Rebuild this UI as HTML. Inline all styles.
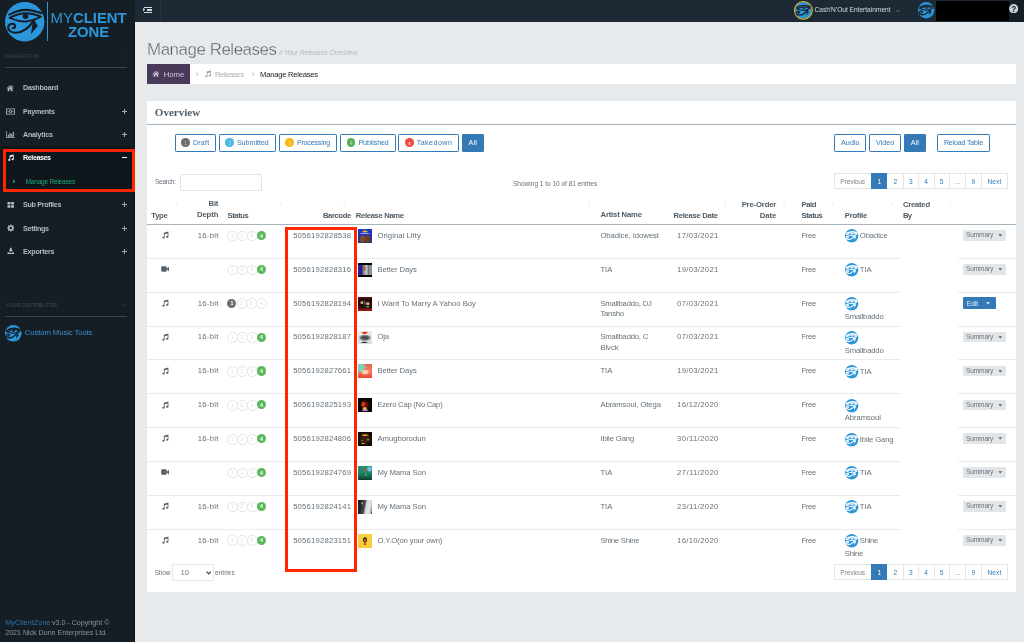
<!DOCTYPE html>
<html lang="en"><head><meta charset="utf-8"><title>Manage Releases - MyClientZone</title>
<style>
html,body{margin:0;padding:0;width:1024px;height:642px;overflow:hidden;background:#e7eaec;}
body{position:relative;font-family:"Liberation Sans",sans-serif;}
div,span,svg{position:absolute;display:block;box-sizing:content-box;}
span{white-space:pre;line-height:1;}
#w{left:0;top:0;width:1024px;height:642px;overflow:hidden;will-change:transform;}
</style></head><body><div id="w">
<div style="left:0.00px;top:0.00px;width:1024.00px;height:642.00px;background:#e7eaec;"></div>
<div style="left:0.00px;top:0.00px;width:135.10px;height:642.00px;background:#151e25;"></div>
<div style="left:134.20px;top:21.50px;width:0.90px;height:642.00px;background:#0c141b;"></div>
<svg style="left:4.90px;top:1.55px;width:39.40px;height:39.40px;overflow:visible" viewBox="0 0 100 100"><circle cx="50" cy="50" r="50" fill="#2b96d9"/><g fill="none" stroke="#151e25" stroke-linecap="round" stroke-linejoin="round"><path d="M11 32 C28 23 42 20 54 20 C68 20 80 25 92 28" stroke-width="5.6"/><path d="M12 40 C30 31 44 28.5 54 28.5 C68 28.5 80 33 91 37 C84 41 78 43 72 46" stroke-width="4.8"/><path d="M12 40 C28 47 42 50.5 54 49.5 C62 48.5 68 47 74 45" stroke-width="4.8"/><path d="M72 48 C62 64 46 77 28 78 C14 78 7 71 8 64 C9 56 18 53 24 57 C28 61 25 67 20 66" stroke-width="5.4"/></g><circle cx="52" cy="36" r="7" fill="#151e25"/><path d="M70.5 49 L66 81 L83.5 60 C80 56 78 53 77 49 Z" fill="#151e25"/></svg>
<div style="left:47.20px;top:1.60px;width:0.90px;height:39.30px;background:#2b96d9;"></div>
<span style="left:50.60px;top:11.00px;font-size:14.9px;color:#2b96d9;letter-spacing:-0.044px;">MY</span>
<span style="left:72.90px;top:11.00px;font-size:14.9px;color:#2b96d9;letter-spacing:0.004px;font-weight:700;">CLIENT</span>
<span style="left:67.90px;top:25.00px;font-size:14.9px;color:#2b96d9;letter-spacing:0.008px;font-weight:700;">ZONE</span>
<span style="left:5.20px;top:54.00px;font-size:5.49px;color:#3d4952;letter-spacing:0.056px;">NAVIGATION</span>
<svg style="left:123.20px;top:54.00px;width:4px;height:4px" viewBox="0 0 10 10" fill="none" stroke="#3d4952" stroke-width="1.50"><path d="M1 7 L5 3 L9 7"/></svg>
<div style="left:5.20px;top:67.10px;width:121.60px;height:0.80px;background:#36424b;"></div>
<svg style="left:6.40px;top:83.70px;width:8.2px;height:8.2px" viewBox="0 0 16 16" fill="#b3bbc1"><path d="M8 2.2 L1 8.3 L2 9.4 L8 4.3 L14 9.4 L15 8.3 L12.6 6.2 V3 H10.8 V4.6 Z"/><path d="M3.2 9.3 L8 5.3 L12.8 9.3 V14 H9.4 V10.5 H6.6 V14 H3.2 Z"/></svg>
<span style="left:23.00px;top:85.00px;font-size:7.14px;color:#b3bbc1;letter-spacing:-0.240px;font-weight:700;">Dashboard</span>
<svg style="left:6.00px;top:106.60px;width:9.0px;height:9.0px" viewBox="0 0 16 16" fill="#b3bbc1"><path fill-rule="evenodd" d="M0.3 2.6 H15.7 V13.4 H0.3 Z M1.9 4.2 V11.8 H14.1 V4.2 Z"/><path fill-rule="evenodd" d="M8 4.8 A2.6 3.2 0 1 0 8 11.2 A2.6 3.2 0 1 0 8 4.8 Z M8 6.4 A1 1.6 0 1 1 8 9.6 A1 1.6 0 1 1 8 6.4 Z"/><rect x="3" y="7.2" width="1.6" height="1.6"/><rect x="11.4" y="7.2" width="1.6" height="1.6"/></svg>
<span style="left:23.00px;top:109.00px;font-size:7.14px;color:#b3bbc1;letter-spacing:-0.259px;font-weight:700;">Payments</span>
<div style="left:122.25px;top:111.00px;width:4.80px;height:1.30px;background:#a4acb2;"></div>
<div style="left:124.00px;top:109.25px;width:1.30px;height:4.80px;background:#a4acb2;"></div>
<svg style="left:6.00px;top:129.80px;width:9.0px;height:9.0px" viewBox="0 0 16 16" fill="#b3bbc1"><path d="M0.5 2 H1.8 V13 H15.5 V14.3 H0.5 Z"/><rect x="3.3" y="8.5" width="2" height="3.7"/><rect x="6.2" y="5.5" width="2" height="6.7"/><rect x="9.1" y="7.2" width="2" height="5"/><rect x="12" y="3.5" width="2" height="8.7"/></svg>
<span style="left:23.00px;top:132.00px;font-size:7.14px;color:#b3bbc1;letter-spacing:-0.215px;font-weight:700;">Analytics</span>
<div style="left:122.25px;top:134.00px;width:4.80px;height:1.30px;background:#a4acb2;"></div>
<div style="left:124.00px;top:132.25px;width:1.30px;height:4.80px;background:#a4acb2;"></div>
<div style="left:0.00px;top:145.60px;width:134.90px;height:46.40px;background:#0f161c;"></div>
<svg style="left:6.90px;top:153.90px;width:7.4px;height:7.4px" viewBox="0 0 16 16" fill="#ffffff"><path d="M5.5 3.2 L14.5 1.2 V11.2 A2.3 1.9 0 1 1 12.9 9.6 V5 L7.1 6.3 V12.8 A2.3 1.9 0 1 1 5.5 11.2 Z"/></svg>
<span style="left:23.00px;top:155.00px;font-size:7.14px;color:#ffffff;letter-spacing:-0.404px;font-weight:700;">Releases</span>
<div style="left:122.20px;top:157.00px;width:4.90px;height:1.30px;background:#ffffff;"></div>
<svg style="left:11.10px;top:177.70px;width:6.4px;height:6.4px" viewBox="0 0 16 16" fill="#1fa67a"><path d="M5 3 L11 8 L5 13 Z"/></svg>
<span style="left:25.60px;top:179.00px;font-size:6.59px;color:#1fa67a;letter-spacing:-0.246px;">Manage Releases</span>
<svg style="left:6.70px;top:200.70px;width:7.6px;height:7.6px" viewBox="0 0 16 16" fill="#b3bbc1"><rect x="1" y="2" width="6.3" height="5.3" rx="0.6"/><rect x="8.7" y="2" width="6.3" height="5.3" rx="0.6"/><rect x="1" y="8.7" width="6.3" height="5.3" rx="0.6"/><rect x="8.7" y="8.7" width="6.3" height="5.3" rx="0.6"/></svg>
<span style="left:23.00px;top:202.00px;font-size:7.14px;color:#b3bbc1;letter-spacing:-0.284px;font-weight:700;">Sub Profiles</span>
<div style="left:122.25px;top:204.00px;width:4.80px;height:1.30px;background:#a4acb2;"></div>
<div style="left:124.00px;top:202.25px;width:1.30px;height:4.80px;background:#a4acb2;"></div>
<svg style="left:6.70px;top:224.10px;width:7.6px;height:7.6px" viewBox="0 0 16 16" fill="#b3bbc1"><path fill-rule="evenodd" d="M6.8 1 H9.2 L9.6 3 L10.9 3.6 L12.6 2.4 L14.2 4.1 L13 5.8 L13.5 7 L15.5 7.4 V9.7 L13.5 10 L13 11.3 L14.2 13 L12.6 14.6 L10.9 13.4 L9.6 14 L9.2 16 H6.8 L6.4 14 L5.1 13.4 L3.4 14.6 L1.8 13 L3 11.3 L2.5 10 L0.5 9.7 V7.4 L2.5 7 L3 5.8 L1.8 4.1 L3.4 2.4 L5.1 3.6 L6.4 3 Z M8 5.8 A2.7 2.7 0 1 0 8 11.2 A2.7 2.7 0 1 0 8 5.8 Z"/></svg>
<span style="left:23.00px;top:226.00px;font-size:7.14px;color:#b3bbc1;letter-spacing:-0.290px;font-weight:700;">Settings</span>
<div style="left:122.25px;top:228.00px;width:4.80px;height:1.30px;background:#a4acb2;"></div>
<div style="left:124.00px;top:226.25px;width:1.30px;height:4.80px;background:#a4acb2;"></div>
<svg style="left:6.70px;top:247.40px;width:7.6px;height:7.6px" viewBox="0 0 16 16" fill="#b3bbc1"><path d="M6.3 1.5 H9.7 V6 H12.6 L8 10.8 L3.4 6 H6.3 Z"/><path d="M1 11 H4.6 L6.3 12.6 H9.7 L11.4 11 H15 V14.8 H1 Z"/></svg>
<span style="left:23.00px;top:249.00px;font-size:7.14px;color:#b3bbc1;letter-spacing:-0.211px;font-weight:700;">Exporters</span>
<div style="left:122.25px;top:251.00px;width:4.80px;height:1.30px;background:#a4acb2;"></div>
<div style="left:124.00px;top:249.25px;width:1.30px;height:4.80px;background:#a4acb2;"></div>
<span style="left:5.20px;top:303.00px;font-size:5.49px;color:#3d4952;letter-spacing:-0.174px;">YOUR DISTRIBUTOR</span>
<svg style="left:123.20px;top:302.80px;width:4px;height:4px" viewBox="0 0 10 10" fill="none" stroke="#3d4952" stroke-width="1.50"><path d="M1 7 L5 3 L9 7"/></svg>
<div style="left:5.20px;top:315.90px;width:121.60px;height:0.80px;background:#36424b;"></div>
<svg style="left:5.00px;top:324.90px;width:16.60px;height:16.60px;overflow:visible" viewBox="0 0 100 100"><circle cx="50" cy="50" r="50" fill="#2b96d9"/><g fill="none" stroke="#151e25" stroke-linecap="round" stroke-linejoin="round"><path d="M11 32 C28 23 42 20 54 20 C68 20 80 25 92 28" stroke-width="8.7"/><path d="M12 40 C30 31 44 28.5 54 28.5 C68 28.5 80 33 91 37 C84 41 78 43 72 46" stroke-width="7.4"/><path d="M12 40 C28 47 42 50.5 54 49.5 C62 48.5 68 47 74 45" stroke-width="7.4"/><path d="M72 48 C62 64 46 77 28 78 C14 78 7 71 8 64 C9 56 18 53 24 57 C28 61 25 67 20 66" stroke-width="8.4"/></g><circle cx="52" cy="36" r="7" fill="#151e25"/><path d="M70.5 49 L66 81 L83.5 60 C80 56 78 53 77 49 Z" fill="#151e25"/></svg>
<span style="left:24.70px;top:329.00px;font-size:7.69px;color:#3a8fd2;letter-spacing:-0.068px;">Custom Music Tools</span>
<span style="left:5.20px;top:620.00px;font-size:7.14px;color:#2f72ad;letter-spacing:0.121px;">MyClientZone</span>
<span style="left:51.90px;top:620.00px;font-size:7.14px;color:#8a949b;letter-spacing:-0.002px;">v3.0 - Copyright ©</span>
<span style="left:5.20px;top:630.00px;font-size:7.14px;color:#8a949b;letter-spacing:-0.023px;">2021 Nick Dunn Enterprises Ltd.</span>
<div style="left:3px;top:148.6px;width:126px;height:37.6px;border:3px solid #ff2600;background:none"></div>
<div style="left:134.90px;top:0.00px;width:889.10px;height:21.50px;background:#1d2a35;"></div>
<div style="left:159.60px;top:0.00px;width:0.80px;height:21.50px;background:#263440;"></div>
<div style="left:143.50px;top:6.60px;width:8.20px;height:1.20px;background:#d3d9dd;"></div>
<div style="left:146.90px;top:9.35px;width:4.80px;height:1.20px;background:#d3d9dd;"></div>
<div style="left:143.50px;top:12.10px;width:8.20px;height:1.20px;background:#d3d9dd;"></div>
<svg style="left:143.3px;top:8.4px;width:3px;height:3.2px" viewBox="0 0 3 3.2" fill="#d3d9dd"><path d="M0 0 L2.4 1.6 L0 3.2Z"/></svg>
<svg style="left:795.10px;top:2.10px;width:16.80px;height:16.80px;overflow:visible" viewBox="0 0 100 100"><circle cx="50" cy="50" r="50" fill="#2b96d9"/><circle cx="50" cy="50" r="53" fill="none" stroke="#f2c01e" stroke-width="6"/><g fill="none" stroke="#1d2a35" stroke-linecap="round" stroke-linejoin="round"><path d="M11 32 C28 23 42 20 54 20 C68 20 80 25 92 28" stroke-width="8.7"/><path d="M12 40 C30 31 44 28.5 54 28.5 C68 28.5 80 33 91 37 C84 41 78 43 72 46" stroke-width="7.4"/><path d="M12 40 C28 47 42 50.5 54 49.5 C62 48.5 68 47 74 45" stroke-width="7.4"/><path d="M72 48 C62 64 46 77 28 78 C14 78 7 71 8 64 C9 56 18 53 24 57 C28 61 25 67 20 66" stroke-width="8.4"/></g><circle cx="52" cy="36" r="7" fill="#1d2a35"/><path d="M70.5 49 L66 81 L83.5 60 C80 56 78 53 77 49 Z" fill="#1d2a35"/></svg>
<span style="left:814.50px;top:7.00px;font-size:6.59px;color:#d5dbe0;letter-spacing:0.001px;">Cash&#x27;N&#x27;Out Entertainment</span>
<svg style="left:896.00px;top:8.80px;width:3.6px;height:3.6px" viewBox="0 0 10 10" fill="none" stroke="#aab3ba" stroke-width="1.67"><path d="M1 3 L5 7 L9 3"/></svg>
<svg style="left:917.80px;top:2.00px;width:16.40px;height:16.40px;overflow:visible" viewBox="0 0 100 100"><circle cx="50" cy="50" r="50" fill="#2b96d9"/><g fill="none" stroke="#1d2a35" stroke-linecap="round" stroke-linejoin="round"><path d="M11 32 C28 23 42 20 54 20 C68 20 80 25 92 28" stroke-width="8.7"/><path d="M12 40 C30 31 44 28.5 54 28.5 C68 28.5 80 33 91 37 C84 41 78 43 72 46" stroke-width="7.4"/><path d="M12 40 C28 47 42 50.5 54 49.5 C62 48.5 68 47 74 45" stroke-width="7.4"/><path d="M72 48 C62 64 46 77 28 78 C14 78 7 71 8 64 C9 56 18 53 24 57 C28 61 25 67 20 66" stroke-width="8.4"/></g><circle cx="52" cy="36" r="7" fill="#1d2a35"/><path d="M70.5 49 L66 81 L83.5 60 C80 56 78 53 77 49 Z" fill="#1d2a35"/></svg>
<div style="left:936.00px;top:0.90px;width:72.90px;height:20.60px;background:#000000;"></div>
<div style="left:1008.90px;top:0.00px;width:15.10px;height:21.50px;background:#151e25;"></div>
<svg style="left:1009.05px;top:4.05px;width:9.4px;height:9.4px" viewBox="0 0 20 20"><circle cx="10" cy="10" r="10" fill="#c9ced2"/></svg>
<span style="left:1011.29px;top:6.00px;font-size:8.2px;color:#151e25;letter-spacing:0.000px;font-weight:700;">?</span>
<span style="left:147.00px;top:42.00px;font-size:16.9px;color:#4a565f;letter-spacing:-0.441px;-webkit-text-stroke:0.38px #e7eaec;">Manage Releases</span>
<span style="left:278.80px;top:50.00px;font-size:7.14px;color:#b3bbc1;letter-spacing:-0.214px;font-style:italic;">// Your Releases Overview</span>
<div style="left:146.50px;top:63.90px;width:869.50px;height:19.70px;background:#ffffff;"></div>
<div style="left:146.50px;top:63.90px;width:43.20px;height:19.70px;background:#4a3a59;"></div>
<svg style="left:151.70px;top:70.00px;width:7.8px;height:7.8px" viewBox="0 0 16 16" fill="#cfc7d8"><path d="M8 2.2 L1 8.3 L2 9.4 L8 4.3 L14 9.4 L15 8.3 L12.6 6.2 V3 H10.8 V4.6 Z"/><path d="M3.2 9.3 L8 5.3 L12.8 9.3 V14 H9.4 V10.5 H6.6 V14 H3.2 Z"/></svg>
<span style="left:163.70px;top:71.00px;font-size:7.69px;color:#cfc7d8;letter-spacing:-0.005px;">Home</span>
<svg style="left:194.60px;top:72.00px;width:4.4px;height:4.4px" viewBox="0 0 10 10" fill="none" stroke="#8f989e" stroke-width="1.70"><path d="M3 1 L7 5 L3 9"/></svg>
<svg style="left:203.60px;top:69.90px;width:7.8px;height:7.8px" viewBox="0 0 16 16" fill="#9aa3a9"><path d="M5.5 3.2 L14.5 1.2 V11.2 A2.3 1.9 0 1 1 12.9 9.6 V5 L7.1 6.3 V12.8 A2.3 1.9 0 1 1 5.5 11.2 Z"/></svg>
<span style="left:215.00px;top:71.00px;font-size:7.69px;color:#a8b0b6;letter-spacing:-0.431px;">Releases</span>
<svg style="left:250.80px;top:72.00px;width:4.4px;height:4.4px" viewBox="0 0 10 10" fill="none" stroke="#8f989e" stroke-width="1.70"><path d="M3 1 L7 5 L3 9"/></svg>
<span style="left:260.00px;top:71.00px;font-size:7.69px;color:#222222;letter-spacing:-0.271px;">Manage Releases</span>
<div style="left:146.50px;top:101.10px;width:869.50px;height:491.00px;background:#ffffff;"></div>
<span style="left:154.80px;top:107.00px;font-size:11.0px;color:#4f5d67;letter-spacing:0.028px;font-weight:700;font-family:'Liberation Serif',serif;">Overview</span>
<div style="left:146.50px;top:124.00px;width:869.50px;height:0.90px;background:#a3b2bc;"></div>
<div style="left:174.50px;top:133.50px;width:39.50px;height:16.50px;border:0.9px solid #337ab7;background:#fff;border-radius:1.2px"></div>
<div style="left:181.30px;top:138.30px;width:8.6px;height:8.6px;border-radius:50%;background:#6b6b6b"></div>
<span style="left:184.26px;top:142.00px;font-size:4.8px;color:rgba(255,255,255,0.55);letter-spacing:0.000px;">1</span>
<span style="left:192.90px;top:140.00px;font-size:7.14px;color:#337ab7;letter-spacing:0.199px;">Draft</span>
<div style="left:218.50px;top:133.50px;width:55.50px;height:16.50px;border:0.9px solid #337ab7;background:#fff;border-radius:1.2px"></div>
<div style="left:225.30px;top:138.30px;width:8.6px;height:8.6px;border-radius:50%;background:#4db6e2"></div>
<span style="left:228.26px;top:142.00px;font-size:4.8px;color:rgba(255,255,255,0.55);letter-spacing:0.000px;">2</span>
<span style="left:236.90px;top:140.00px;font-size:7.14px;color:#337ab7;letter-spacing:-0.020px;">Submitted</span>
<div style="left:278.50px;top:133.50px;width:56.70px;height:16.50px;border:0.9px solid #337ab7;background:#fff;border-radius:1.2px"></div>
<div style="left:285.30px;top:138.30px;width:8.6px;height:8.6px;border-radius:50%;background:#fbb516"></div>
<span style="left:288.26px;top:142.00px;font-size:4.8px;color:rgba(255,255,255,0.55);letter-spacing:0.000px;">3</span>
<span style="left:296.90px;top:140.00px;font-size:7.14px;color:#337ab7;letter-spacing:-0.210px;">Processing</span>
<div style="left:340.00px;top:133.50px;width:53.70px;height:16.50px;border:0.9px solid #337ab7;background:#fff;border-radius:1.2px"></div>
<div style="left:346.80px;top:138.30px;width:8.6px;height:8.6px;border-radius:50%;background:#58b158"></div>
<span style="left:349.76px;top:142.00px;font-size:4.8px;color:rgba(255,255,255,0.55);letter-spacing:0.000px;">4</span>
<span style="left:358.40px;top:140.00px;font-size:7.14px;color:#337ab7;letter-spacing:-0.109px;">Published</span>
<div style="left:398.30px;top:133.50px;width:58.70px;height:16.50px;border:0.9px solid #337ab7;background:#fff;border-radius:1.2px"></div>
<div style="left:405.10px;top:138.30px;width:8.6px;height:8.6px;border-radius:50%;background:#f0483e"></div>
<span style="left:407.90px;top:140.00px;font-size:6.0px;color:#ffffff;letter-spacing:0.000px;">x</span>
<span style="left:416.70px;top:140.00px;font-size:7.14px;color:#337ab7;letter-spacing:0.444px;">Takedown</span>
<div style="left:461.50px;top:133.50px;width:22.30px;height:18.30px;background:#337ab7;border-radius:1.2px;"></div>
<span style="left:468.56px;top:140.00px;font-size:7.14px;color:#ffffff;letter-spacing:0.133px;">All</span>
<div style="left:834.30px;top:133.50px;width:30.20px;height:16.50px;border:0.9px solid #337ab7;background:#fff;border-radius:1.2px"></div>
<span style="left:841.07px;top:140.00px;font-size:7.14px;color:#337ab7;letter-spacing:0.055px;">Audio</span>
<div style="left:869.30px;top:133.50px;width:29.70px;height:16.50px;border:0.9px solid #337ab7;background:#fff;border-radius:1.2px"></div>
<span style="left:875.89px;top:140.00px;font-size:7.14px;color:#337ab7;letter-spacing:0.055px;">Video</span>
<div style="left:903.80px;top:133.50px;width:22.00px;height:18.30px;background:#337ab7;border-radius:1.2px;"></div>
<span style="left:910.71px;top:140.00px;font-size:7.14px;color:#ffffff;letter-spacing:0.133px;">All</span>
<div style="left:937.00px;top:133.50px;width:51.20px;height:16.50px;border:0.9px solid #337ab7;background:#fff;border-radius:1.2px"></div>
<span style="left:943.88px;top:140.00px;font-size:7.14px;color:#337ab7;letter-spacing:-0.203px;">Reload Table</span>
<span style="left:154.90px;top:179.00px;font-size:6.59px;color:#67727a;letter-spacing:-0.279px;">Search:</span>
<div style="left:179.5px;top:174.3px;width:80.6px;height:14.6px;border:0.8px solid #dfe3e6;background:#fff;border-radius:1px"></div>
<span style="left:513.00px;top:181.00px;font-size:6.59px;color:#67727a;letter-spacing:-0.033px;">Showing 1 to 10 of 81 entries</span>
<div style="left:834.30px;top:173.00px;width:172.00px;height:14.30px;border:0.6px solid #e3e6e9;background:#fff"></div>
<span style="left:840.37px;top:179.00px;font-size:6.59px;color:#7b858c;letter-spacing:-0.118px;">Previous</span>
<div style="left:871.20px;top:173.00px;width:16.30px;height:15.50px;background:#337ab7;"></div>
<span style="left:877.51px;top:179.00px;font-size:6.59px;color:#ffffff;letter-spacing:0.000px;">1</span>
<span style="left:893.41px;top:179.00px;font-size:6.59px;color:#337ab7;letter-spacing:0.000px;">2</span>
<div style="left:902.70px;top:173.00px;width:0.60px;height:15.50px;background:#e3e6e9;"></div>
<span style="left:908.91px;top:179.00px;font-size:6.59px;color:#337ab7;letter-spacing:0.000px;">3</span>
<div style="left:918.20px;top:173.00px;width:0.60px;height:15.50px;background:#e3e6e9;"></div>
<span style="left:924.31px;top:179.00px;font-size:6.59px;color:#337ab7;letter-spacing:0.000px;">4</span>
<div style="left:933.50px;top:173.00px;width:0.60px;height:15.50px;background:#e3e6e9;"></div>
<span style="left:939.81px;top:179.00px;font-size:6.59px;color:#337ab7;letter-spacing:0.000px;">5</span>
<div style="left:949.20px;top:173.00px;width:0.60px;height:15.50px;background:#e3e6e9;"></div>
<span style="left:954.21px;top:179.00px;font-size:6.59px;color:#7b858c;letter-spacing:0.000px;">…</span>
<div style="left:965.20px;top:173.00px;width:0.60px;height:15.50px;background:#e3e6e9;"></div>
<span style="left:971.56px;top:179.00px;font-size:6.59px;color:#337ab7;letter-spacing:0.000px;">9</span>
<div style="left:981.00px;top:173.00px;width:0.60px;height:15.50px;background:#e3e6e9;"></div>
<span style="left:987.40px;top:179.00px;font-size:6.59px;color:#337ab7;letter-spacing:0.156px;">Next</span>
<div style="left:834.30px;top:564.00px;width:172.00px;height:14.30px;border:0.6px solid #e3e6e9;background:#fff"></div>
<span style="left:840.37px;top:570.00px;font-size:6.59px;color:#7b858c;letter-spacing:-0.118px;">Previous</span>
<div style="left:871.20px;top:564.00px;width:16.30px;height:15.50px;background:#337ab7;"></div>
<span style="left:877.51px;top:570.00px;font-size:6.59px;color:#ffffff;letter-spacing:0.000px;">1</span>
<span style="left:893.41px;top:570.00px;font-size:6.59px;color:#337ab7;letter-spacing:0.000px;">2</span>
<div style="left:902.70px;top:564.00px;width:0.60px;height:15.50px;background:#e3e6e9;"></div>
<span style="left:908.91px;top:570.00px;font-size:6.59px;color:#337ab7;letter-spacing:0.000px;">3</span>
<div style="left:918.20px;top:564.00px;width:0.60px;height:15.50px;background:#e3e6e9;"></div>
<span style="left:924.31px;top:570.00px;font-size:6.59px;color:#337ab7;letter-spacing:0.000px;">4</span>
<div style="left:933.50px;top:564.00px;width:0.60px;height:15.50px;background:#e3e6e9;"></div>
<span style="left:939.81px;top:570.00px;font-size:6.59px;color:#337ab7;letter-spacing:0.000px;">5</span>
<div style="left:949.20px;top:564.00px;width:0.60px;height:15.50px;background:#e3e6e9;"></div>
<span style="left:954.21px;top:570.00px;font-size:6.59px;color:#7b858c;letter-spacing:0.000px;">…</span>
<div style="left:965.20px;top:564.00px;width:0.60px;height:15.50px;background:#e3e6e9;"></div>
<span style="left:971.56px;top:570.00px;font-size:6.59px;color:#337ab7;letter-spacing:0.000px;">9</span>
<div style="left:981.00px;top:564.00px;width:0.60px;height:15.50px;background:#e3e6e9;"></div>
<span style="left:987.40px;top:570.00px;font-size:6.59px;color:#337ab7;letter-spacing:0.156px;">Next</span>
<span style="left:151.30px;top:212.00px;font-size:7.69px;color:#4f5c66;letter-spacing:-0.292px;font-weight:700;">Type</span>
<span style="left:208.59px;top:200.00px;font-size:7.69px;color:#4f5c66;letter-spacing:-0.219px;font-weight:700;">Bit</span>
<span style="left:196.98px;top:211.00px;font-size:7.69px;color:#4f5c66;letter-spacing:-0.090px;font-weight:700;">Depth</span>
<span style="left:227.50px;top:212.00px;font-size:7.69px;color:#4f5c66;letter-spacing:-0.431px;font-weight:700;">Status</span>
<span style="left:323.01px;top:212.00px;font-size:7.69px;color:#4f5c66;letter-spacing:-0.430px;font-weight:700;">Barcode</span>
<span style="left:355.80px;top:212.00px;font-size:7.69px;color:#4f5c66;letter-spacing:-0.347px;font-weight:700;">Release Name</span>
<span style="left:600.50px;top:211.00px;font-size:7.69px;color:#4f5c66;letter-spacing:-0.163px;font-weight:700;">Artist Name</span>
<span style="left:673.41px;top:212.00px;font-size:7.69px;color:#4f5c66;letter-spacing:-0.298px;font-weight:700;">Release Date</span>
<span style="left:741.63px;top:201.00px;font-size:7.69px;color:#4f5c66;letter-spacing:-0.152px;font-weight:700;">Pre-Order</span>
<span style="left:759.75px;top:212.00px;font-size:7.69px;color:#4f5c66;letter-spacing:-0.042px;font-weight:700;">Date</span>
<span style="left:801.50px;top:201.00px;font-size:7.69px;color:#4f5c66;letter-spacing:-0.464px;font-weight:700;">Paid</span>
<span style="left:801.50px;top:212.00px;font-size:7.69px;color:#4f5c66;letter-spacing:-0.431px;font-weight:700;">Status</span>
<span style="left:844.80px;top:212.00px;font-size:7.69px;color:#4f5c66;letter-spacing:-0.255px;font-weight:700;">Profile</span>
<span style="left:903.00px;top:201.00px;font-size:7.69px;color:#4f5c66;letter-spacing:-0.258px;font-weight:700;">Created</span>
<span style="left:903.00px;top:212.00px;font-size:7.69px;color:#4f5c66;letter-spacing:-0.781px;font-weight:700;">By</span>
<svg style="left:175.70px;top:201.2px;width:2.6px;height:5.2px" viewBox="0 0 5 10" fill="#eceff1"><path d="M0 4 L2.5 0 L5 4Z M0 6 L2.5 10 L5 6Z"/></svg>
<svg style="left:279.90px;top:201.2px;width:2.6px;height:5.2px" viewBox="0 0 5 10" fill="#eceff1"><path d="M0 4 L2.5 0 L5 4Z M0 6 L2.5 10 L5 6Z"/></svg>
<svg style="left:343.20px;top:201.2px;width:2.6px;height:5.2px" viewBox="0 0 5 10" fill="#eceff1"><path d="M0 4 L2.5 0 L5 4Z M0 6 L2.5 10 L5 6Z"/></svg>
<svg style="left:587.50px;top:201.2px;width:2.6px;height:5.2px" viewBox="0 0 5 10" fill="#eceff1"><path d="M0 4 L2.5 0 L5 4Z M0 6 L2.5 10 L5 6Z"/></svg>
<svg style="left:723.70px;top:201.2px;width:2.6px;height:5.2px" viewBox="0 0 5 10" fill="#eceff1"><path d="M0 4 L2.5 0 L5 4Z M0 6 L2.5 10 L5 6Z"/></svg>
<svg style="left:782.50px;top:201.2px;width:2.6px;height:5.2px" viewBox="0 0 5 10" fill="#eceff1"><path d="M0 4 L2.5 0 L5 4Z M0 6 L2.5 10 L5 6Z"/></svg>
<svg style="left:831.70px;top:201.2px;width:2.6px;height:5.2px" viewBox="0 0 5 10" fill="#eceff1"><path d="M0 4 L2.5 0 L5 4Z M0 6 L2.5 10 L5 6Z"/></svg>
<svg style="left:890.70px;top:201.2px;width:2.6px;height:5.2px" viewBox="0 0 5 10" fill="#eceff1"><path d="M0 4 L2.5 0 L5 4Z M0 6 L2.5 10 L5 6Z"/></svg>
<svg style="left:948.70px;top:201.2px;width:2.6px;height:5.2px" viewBox="0 0 5 10" fill="#eceff1"><path d="M0 4 L2.5 0 L5 4Z M0 6 L2.5 10 L5 6Z"/></svg>
<div style="left:146.50px;top:224.00px;width:869.50px;height:1.00px;background:#a9b5bd;"></div>
<svg style="left:161.30px;top:231.30px;width:8.2px;height:8.2px" viewBox="0 0 16 16" fill="#55626c"><path d="M5.5 3.2 L14.5 1.2 V11.2 A2.3 1.9 0 1 1 12.9 9.6 V5 L7.1 6.3 V12.8 A2.3 1.9 0 1 1 5.5 11.2 Z"/></svg>
<span style="left:197.71px;top:232.00px;font-size:7.69px;color:#67727a;letter-spacing:0.291px;">16-bit</span>
<div style="left:227.30px;top:230.75px;width:8.6px;height:8.6px;border-radius:50%;background:#fff;border:0.5px solid #e2e5e7"></div>
<span style="left:230.73px;top:234.00px;font-size:4.9px;color:#d9dcdf;letter-spacing:0.000px;">1</span>
<div style="left:237.15px;top:230.75px;width:8.6px;height:8.6px;border-radius:50%;background:#fff;border:0.5px solid #e2e5e7"></div>
<span style="left:240.58px;top:234.00px;font-size:4.9px;color:#d9dcdf;letter-spacing:0.000px;">2</span>
<div style="left:247.00px;top:230.75px;width:8.6px;height:8.6px;border-radius:50%;background:#fff;border:0.5px solid #e2e5e7"></div>
<span style="left:250.43px;top:234.00px;font-size:4.9px;color:#d9dcdf;letter-spacing:0.000px;">3</span>
<div style="left:256.95px;top:231.00px;width:9.1px;height:9.1px;border-radius:50%;background:#5cb85c"></div>
<span style="left:260.05px;top:234.00px;font-size:5.2px;color:#ffffff;letter-spacing:0.000px;font-weight:700;">4</span>
<span style="left:293.13px;top:232.00px;font-size:7.69px;color:#67727a;letter-spacing:0.198px;">5056192828538</span>
<div style="left:358.1px;top:229.00px;width:13.8px;height:13.8px;background:radial-gradient(ellipse 24% 30% at 32% 72%,#7b4a28 0 65%,transparent 100%),radial-gradient(ellipse 24% 32% at 68% 70%,#6b3e1e 0 65%,transparent 100%),radial-gradient(ellipse 22% 8% at 50% 17%,#e6bf22 0 60%,transparent 100%),radial-gradient(ellipse 38% 7% at 48% 31%,#aab0cc 0 60%,transparent 100%),linear-gradient(180deg,#2436c6 0%,#2230b4 70%,#3a3a52 100%)"></div>
<span style="left:377.40px;top:232.00px;font-size:7.69px;color:#67727a;letter-spacing:0.056px;">Original Litty</span>
<span style="left:600.40px;top:232.00px;font-size:7.69px;color:#67727a;letter-spacing:-0.059px;">Obadice, Idowest</span>
<span style="left:677.10px;top:232.00px;font-size:7.69px;color:#67727a;letter-spacing:0.302px;">17/03/2021</span>
<span style="left:801.50px;top:232.00px;font-size:7.69px;color:#67727a;letter-spacing:-0.344px;">Free</span>
<svg style="left:844.70px;top:229.40px;width:13.40px;height:13.40px;overflow:visible" viewBox="0 0 100 100"><circle cx="50" cy="50" r="50" fill="#2b96d9"/><g fill="none" stroke="#ffffff" stroke-linecap="round" stroke-linejoin="round"><path d="M11 32 C28 23 42 20 54 20 C68 20 80 25 92 28" stroke-width="8.7"/><path d="M12 40 C30 31 44 28.5 54 28.5 C68 28.5 80 33 91 37 C84 41 78 43 72 46" stroke-width="7.4"/><path d="M12 40 C28 47 42 50.5 54 49.5 C62 48.5 68 47 74 45" stroke-width="7.4"/><path d="M72 48 C62 64 46 77 28 78 C14 78 7 71 8 64 C9 56 18 53 24 57 C28 61 25 67 20 66" stroke-width="8.4"/></g><circle cx="52" cy="36" r="7" fill="#ffffff"/><path d="M70.5 49 L66 81 L83.5 60 C80 56 78 53 77 49 Z" fill="#ffffff"/></svg>
<span style="left:859.80px;top:232.00px;font-size:7.69px;color:#67727a;letter-spacing:-0.102px;">Obadice</span>
<div style="left:963.00px;top:230.20px;width:42.50px;height:10.60px;background:#e3e6e8;border-radius:1px;"></div>
<span style="left:966.00px;top:232.00px;font-size:6.59px;color:#6a747b;letter-spacing:-0.143px;">Summary</span>
<svg style="left:997.30px;top:232.30px;width:6.6px;height:6.6px" viewBox="0 0 16 16" fill="#5f6970"><path d="M3 5.5 H13 L8 11 Z"/></svg>
<div style="left:146.50px;top:257.86px;width:753.50px;height:1.00px;background:#e8ecee;"></div>
<div style="left:958.00px;top:257.86px;width:58.00px;height:1.00px;background:#e8ecee;"></div>
<svg style="left:161.30px;top:264.86px;width:8.2px;height:8.2px" viewBox="0 0 16 16" fill="#55626c"><rect x="0.4" y="2.6" width="10.8" height="10.8" rx="2.2"/><path d="M11.6 6.6 L15.6 3.2 V12.8 L11.6 9.4 Z"/></svg>
<div style="left:227.30px;top:264.61px;width:8.6px;height:8.6px;border-radius:50%;background:#fff;border:0.5px solid #e2e5e7"></div>
<span style="left:230.73px;top:268.00px;font-size:4.9px;color:#d9dcdf;letter-spacing:0.000px;">1</span>
<div style="left:237.15px;top:264.61px;width:8.6px;height:8.6px;border-radius:50%;background:#fff;border:0.5px solid #e2e5e7"></div>
<span style="left:240.58px;top:268.00px;font-size:4.9px;color:#d9dcdf;letter-spacing:0.000px;">2</span>
<div style="left:247.00px;top:264.61px;width:8.6px;height:8.6px;border-radius:50%;background:#fff;border:0.5px solid #e2e5e7"></div>
<span style="left:250.43px;top:268.00px;font-size:4.9px;color:#d9dcdf;letter-spacing:0.000px;">3</span>
<div style="left:256.95px;top:264.86px;width:9.1px;height:9.1px;border-radius:50%;background:#5cb85c"></div>
<span style="left:260.05px;top:267.00px;font-size:5.2px;color:#ffffff;letter-spacing:0.000px;font-weight:700;">4</span>
<span style="left:293.13px;top:266.00px;font-size:7.69px;color:#67727a;letter-spacing:0.198px;">5056192828316</span>
<div style="left:358.1px;top:262.86px;width:13.8px;height:13.8px;background:linear-gradient(180deg,#000 0 16%,transparent 16% 84%,#000 84% 100%),radial-gradient(ellipse 10% 22% at 46% 38%,#a5633c 0 60%,transparent 100%),linear-gradient(90deg,#3a2a6a 0%,#2a1cb0 14%,#241a98 26%,#5f6670 34%,#a9afb6 50%,#c4c9ce 62%,#6b7076 74%,#9a9fa5 86%,#7d8288 100%)"></div>
<span style="left:377.40px;top:266.00px;font-size:7.69px;color:#67727a;letter-spacing:-0.062px;">Better Days</span>
<span style="left:600.40px;top:266.00px;font-size:7.69px;color:#67727a;letter-spacing:-0.031px;">TIA</span>
<span style="left:677.10px;top:266.00px;font-size:7.69px;color:#67727a;letter-spacing:0.302px;">19/03/2021</span>
<span style="left:801.50px;top:266.00px;font-size:7.69px;color:#67727a;letter-spacing:-0.344px;">Free</span>
<svg style="left:844.70px;top:263.26px;width:13.40px;height:13.40px;overflow:visible" viewBox="0 0 100 100"><circle cx="50" cy="50" r="50" fill="#2b96d9"/><g fill="none" stroke="#ffffff" stroke-linecap="round" stroke-linejoin="round"><path d="M11 32 C28 23 42 20 54 20 C68 20 80 25 92 28" stroke-width="8.7"/><path d="M12 40 C30 31 44 28.5 54 28.5 C68 28.5 80 33 91 37 C84 41 78 43 72 46" stroke-width="7.4"/><path d="M12 40 C28 47 42 50.5 54 49.5 C62 48.5 68 47 74 45" stroke-width="7.4"/><path d="M72 48 C62 64 46 77 28 78 C14 78 7 71 8 64 C9 56 18 53 24 57 C28 61 25 67 20 66" stroke-width="8.4"/></g><circle cx="52" cy="36" r="7" fill="#ffffff"/><path d="M70.5 49 L66 81 L83.5 60 C80 56 78 53 77 49 Z" fill="#ffffff"/></svg>
<span style="left:859.80px;top:266.00px;font-size:7.69px;color:#67727a;letter-spacing:-0.031px;">TIA</span>
<div style="left:963.00px;top:264.06px;width:42.50px;height:10.60px;background:#e3e6e8;border-radius:1px;"></div>
<span style="left:966.00px;top:266.00px;font-size:6.59px;color:#6a747b;letter-spacing:-0.143px;">Summary</span>
<svg style="left:997.30px;top:266.16px;width:6.6px;height:6.6px" viewBox="0 0 16 16" fill="#5f6970"><path d="M3 5.5 H13 L8 11 Z"/></svg>
<div style="left:146.50px;top:291.72px;width:753.50px;height:1.00px;background:#e8ecee;"></div>
<div style="left:958.00px;top:291.72px;width:58.00px;height:1.00px;background:#e8ecee;"></div>
<svg style="left:161.30px;top:299.02px;width:8.2px;height:8.2px" viewBox="0 0 16 16" fill="#55626c"><path d="M5.5 3.2 L14.5 1.2 V11.2 A2.3 1.9 0 1 1 12.9 9.6 V5 L7.1 6.3 V12.8 A2.3 1.9 0 1 1 5.5 11.2 Z"/></svg>
<span style="left:197.71px;top:300.00px;font-size:7.69px;color:#67727a;letter-spacing:0.291px;">16-bit</span>
<div style="left:227.35px;top:298.72px;width:9.1px;height:9.1px;border-radius:50%;background:#6e6e6e"></div>
<span style="left:230.45px;top:301.00px;font-size:5.2px;color:#ffffff;letter-spacing:0.000px;font-weight:700;">1</span>
<div style="left:236.50px;top:298.47px;width:8.6px;height:8.6px;border-radius:50%;background:#fff;border:0.5px solid #e2e5e7"></div>
<span style="left:239.93px;top:302.00px;font-size:4.9px;color:#d9dcdf;letter-spacing:0.000px;">2</span>
<div style="left:246.30px;top:298.47px;width:8.6px;height:8.6px;border-radius:50%;background:#fff;border:0.5px solid #e2e5e7"></div>
<span style="left:249.73px;top:302.00px;font-size:4.9px;color:#d9dcdf;letter-spacing:0.000px;">3</span>
<div style="left:256.10px;top:298.47px;width:8.6px;height:8.6px;border-radius:50%;background:#fff;border:0.5px solid #e2e5e7"></div>
<span style="left:259.53px;top:302.00px;font-size:4.9px;color:#d9dcdf;letter-spacing:0.000px;">4</span>
<span style="left:293.13px;top:300.00px;font-size:7.69px;color:#67727a;letter-spacing:0.198px;">5056192828194</span>
<div style="left:358.1px;top:296.72px;width:13.8px;height:13.8px;background:radial-gradient(ellipse 14% 13% at 28% 40%,#c9a57a 0 55%,transparent 100%),radial-gradient(ellipse 17% 14% at 70% 48%,#d0ad7c 0 55%,transparent 100%),radial-gradient(ellipse 18% 7% at 68% 70%,#3f8a3c 0 60%,transparent 100%),radial-gradient(ellipse 8% 22% at 47% 42%,#55606c 0 50%,transparent 100%),linear-gradient(180deg,#7a1414 0%,#2a0a0a 12%,#1a0808 50%,#3a1010 78%,#a01818 92%,#8a1212 100%)"></div>
<span style="left:377.40px;top:300.00px;font-size:7.69px;color:#67727a;letter-spacing:-0.033px;">I Want To Marry A Yahoo Boy</span>
<span style="left:600.40px;top:300.00px;font-size:7.69px;color:#67727a;letter-spacing:-0.215px;">Smallbaddo, DJ</span>
<span style="left:600.40px;top:310.00px;font-size:7.69px;color:#67727a;letter-spacing:-0.206px;">Tansho</span>
<span style="left:677.10px;top:300.00px;font-size:7.69px;color:#67727a;letter-spacing:0.302px;">07/03/2021</span>
<span style="left:801.50px;top:300.00px;font-size:7.69px;color:#67727a;letter-spacing:-0.344px;">Free</span>
<svg style="left:844.70px;top:297.12px;width:13.40px;height:13.40px;overflow:visible" viewBox="0 0 100 100"><circle cx="50" cy="50" r="50" fill="#2b96d9"/><g fill="none" stroke="#ffffff" stroke-linecap="round" stroke-linejoin="round"><path d="M11 32 C28 23 42 20 54 20 C68 20 80 25 92 28" stroke-width="8.7"/><path d="M12 40 C30 31 44 28.5 54 28.5 C68 28.5 80 33 91 37 C84 41 78 43 72 46" stroke-width="7.4"/><path d="M12 40 C28 47 42 50.5 54 49.5 C62 48.5 68 47 74 45" stroke-width="7.4"/><path d="M72 48 C62 64 46 77 28 78 C14 78 7 71 8 64 C9 56 18 53 24 57 C28 61 25 67 20 66" stroke-width="8.4"/></g><circle cx="52" cy="36" r="7" fill="#ffffff"/><path d="M70.5 49 L66 81 L83.5 60 C80 56 78 53 77 49 Z" fill="#ffffff"/></svg>
<span style="left:844.80px;top:313.00px;font-size:7.69px;color:#67727a;letter-spacing:-0.184px;">Smallbaddo</span>
<div style="left:963.00px;top:296.82px;width:32.80px;height:12.20px;background:#337ab7;border-radius:1px;"></div>
<div style="left:981.20px;top:296.82px;width:0.50px;height:12.20px;background:#2e6da4;"></div>
<span style="left:966.80px;top:301.00px;font-size:6.59px;color:#e6eef6;letter-spacing:-0.021px;">Edit</span>
<svg style="left:985.40px;top:300.32px;width:6.2px;height:6.2px" viewBox="0 0 16 16" fill="#ffffff"><path d="M3 5.5 H13 L8 11 Z"/></svg>
<div style="left:146.50px;top:325.58px;width:753.50px;height:1.00px;background:#e8ecee;"></div>
<div style="left:958.00px;top:325.58px;width:58.00px;height:1.00px;background:#e8ecee;"></div>
<svg style="left:161.30px;top:332.88px;width:8.2px;height:8.2px" viewBox="0 0 16 16" fill="#55626c"><path d="M5.5 3.2 L14.5 1.2 V11.2 A2.3 1.9 0 1 1 12.9 9.6 V5 L7.1 6.3 V12.8 A2.3 1.9 0 1 1 5.5 11.2 Z"/></svg>
<span style="left:197.71px;top:333.00px;font-size:7.69px;color:#67727a;letter-spacing:0.291px;">16-bit</span>
<div style="left:227.30px;top:332.33px;width:8.6px;height:8.6px;border-radius:50%;background:#fff;border:0.5px solid #e2e5e7"></div>
<span style="left:230.73px;top:336.00px;font-size:4.9px;color:#d9dcdf;letter-spacing:0.000px;">1</span>
<div style="left:237.15px;top:332.33px;width:8.6px;height:8.6px;border-radius:50%;background:#fff;border:0.5px solid #e2e5e7"></div>
<span style="left:240.58px;top:336.00px;font-size:4.9px;color:#d9dcdf;letter-spacing:0.000px;">2</span>
<div style="left:247.00px;top:332.33px;width:8.6px;height:8.6px;border-radius:50%;background:#fff;border:0.5px solid #e2e5e7"></div>
<span style="left:250.43px;top:336.00px;font-size:4.9px;color:#d9dcdf;letter-spacing:0.000px;">3</span>
<div style="left:256.95px;top:332.58px;width:9.1px;height:9.1px;border-radius:50%;background:#5cb85c"></div>
<span style="left:260.05px;top:335.00px;font-size:5.2px;color:#ffffff;letter-spacing:0.000px;font-weight:700;">4</span>
<span style="left:293.13px;top:333.00px;font-size:7.69px;color:#67727a;letter-spacing:0.198px;">5056192828187</span>
<div style="left:358.1px;top:330.58px;width:13.8px;height:13.8px;background:radial-gradient(ellipse 24% 10% at 48% 13%,#ee3a1c 0 70%,transparent 100%),radial-gradient(ellipse 30% 6% at 45% 86%,#3a3d42 0 60%,transparent 100%),radial-gradient(ellipse 46% 26% at 50% 52%,#4b4e54 0 40%,#8a8d92 75%,transparent 100%),linear-gradient(180deg,#eeeeee,#d9dadb)"></div>
<span style="left:377.40px;top:333.00px;font-size:7.69px;color:#67727a;letter-spacing:-0.109px;">Oja</span>
<span style="left:600.40px;top:333.00px;font-size:7.69px;color:#67727a;letter-spacing:-0.219px;">Smallbaddo, C</span>
<span style="left:600.40px;top:344.00px;font-size:7.69px;color:#67727a;letter-spacing:-0.055px;">Blvck</span>
<span style="left:677.10px;top:333.00px;font-size:7.69px;color:#67727a;letter-spacing:0.302px;">07/03/2021</span>
<span style="left:801.50px;top:333.00px;font-size:7.69px;color:#67727a;letter-spacing:-0.344px;">Free</span>
<svg style="left:844.70px;top:330.98px;width:13.40px;height:13.40px;overflow:visible" viewBox="0 0 100 100"><circle cx="50" cy="50" r="50" fill="#2b96d9"/><g fill="none" stroke="#ffffff" stroke-linecap="round" stroke-linejoin="round"><path d="M11 32 C28 23 42 20 54 20 C68 20 80 25 92 28" stroke-width="8.7"/><path d="M12 40 C30 31 44 28.5 54 28.5 C68 28.5 80 33 91 37 C84 41 78 43 72 46" stroke-width="7.4"/><path d="M12 40 C28 47 42 50.5 54 49.5 C62 48.5 68 47 74 45" stroke-width="7.4"/><path d="M72 48 C62 64 46 77 28 78 C14 78 7 71 8 64 C9 56 18 53 24 57 C28 61 25 67 20 66" stroke-width="8.4"/></g><circle cx="52" cy="36" r="7" fill="#ffffff"/><path d="M70.5 49 L66 81 L83.5 60 C80 56 78 53 77 49 Z" fill="#ffffff"/></svg>
<span style="left:844.80px;top:347.00px;font-size:7.69px;color:#67727a;letter-spacing:-0.184px;">Smallbaddo</span>
<div style="left:963.00px;top:331.78px;width:42.50px;height:10.60px;background:#e3e6e8;border-radius:1px;"></div>
<span style="left:966.00px;top:334.00px;font-size:6.59px;color:#6a747b;letter-spacing:-0.143px;">Summary</span>
<svg style="left:997.30px;top:333.88px;width:6.6px;height:6.6px" viewBox="0 0 16 16" fill="#5f6970"><path d="M3 5.5 H13 L8 11 Z"/></svg>
<div style="left:146.50px;top:359.44px;width:753.50px;height:1.00px;background:#e8ecee;"></div>
<div style="left:958.00px;top:359.44px;width:58.00px;height:1.00px;background:#e8ecee;"></div>
<svg style="left:161.30px;top:366.74px;width:8.2px;height:8.2px" viewBox="0 0 16 16" fill="#55626c"><path d="M5.5 3.2 L14.5 1.2 V11.2 A2.3 1.9 0 1 1 12.9 9.6 V5 L7.1 6.3 V12.8 A2.3 1.9 0 1 1 5.5 11.2 Z"/></svg>
<span style="left:197.71px;top:367.00px;font-size:7.69px;color:#67727a;letter-spacing:0.291px;">16-bit</span>
<div style="left:227.30px;top:366.19px;width:8.6px;height:8.6px;border-radius:50%;background:#fff;border:0.5px solid #e2e5e7"></div>
<span style="left:230.73px;top:370.00px;font-size:4.9px;color:#d9dcdf;letter-spacing:0.000px;">1</span>
<div style="left:237.15px;top:366.19px;width:8.6px;height:8.6px;border-radius:50%;background:#fff;border:0.5px solid #e2e5e7"></div>
<span style="left:240.58px;top:370.00px;font-size:4.9px;color:#d9dcdf;letter-spacing:0.000px;">2</span>
<div style="left:247.00px;top:366.19px;width:8.6px;height:8.6px;border-radius:50%;background:#fff;border:0.5px solid #e2e5e7"></div>
<span style="left:250.43px;top:370.00px;font-size:4.9px;color:#d9dcdf;letter-spacing:0.000px;">3</span>
<div style="left:256.95px;top:366.44px;width:9.1px;height:9.1px;border-radius:50%;background:#5cb85c"></div>
<span style="left:260.05px;top:369.00px;font-size:5.2px;color:#ffffff;letter-spacing:0.000px;font-weight:700;">4</span>
<span style="left:293.13px;top:367.00px;font-size:7.69px;color:#67727a;letter-spacing:0.198px;">5056192827661</span>
<div style="left:358.1px;top:364.44px;width:13.8px;height:13.8px;background:radial-gradient(ellipse 32% 20% at 52% 58%,#f7cfae 0 55%,transparent 100%),radial-gradient(ellipse 40% 45% at 15% 22%,#7fd2ba 0 60%,transparent 100%),radial-gradient(ellipse 7% 7% at 56% 22%,#6fd0d0 0 60%,transparent 100%),linear-gradient(180deg,#f0644a 0%,#f37e62 50%,#ee4a30 100%)"></div>
<span style="left:377.40px;top:367.00px;font-size:7.69px;color:#67727a;letter-spacing:-0.062px;">Better Days</span>
<span style="left:600.40px;top:367.00px;font-size:7.69px;color:#67727a;letter-spacing:-0.031px;">TIA</span>
<span style="left:677.10px;top:367.00px;font-size:7.69px;color:#67727a;letter-spacing:0.302px;">19/03/2021</span>
<span style="left:801.50px;top:367.00px;font-size:7.69px;color:#67727a;letter-spacing:-0.344px;">Free</span>
<svg style="left:844.70px;top:364.84px;width:13.40px;height:13.40px;overflow:visible" viewBox="0 0 100 100"><circle cx="50" cy="50" r="50" fill="#2b96d9"/><g fill="none" stroke="#ffffff" stroke-linecap="round" stroke-linejoin="round"><path d="M11 32 C28 23 42 20 54 20 C68 20 80 25 92 28" stroke-width="8.7"/><path d="M12 40 C30 31 44 28.5 54 28.5 C68 28.5 80 33 91 37 C84 41 78 43 72 46" stroke-width="7.4"/><path d="M12 40 C28 47 42 50.5 54 49.5 C62 48.5 68 47 74 45" stroke-width="7.4"/><path d="M72 48 C62 64 46 77 28 78 C14 78 7 71 8 64 C9 56 18 53 24 57 C28 61 25 67 20 66" stroke-width="8.4"/></g><circle cx="52" cy="36" r="7" fill="#ffffff"/><path d="M70.5 49 L66 81 L83.5 60 C80 56 78 53 77 49 Z" fill="#ffffff"/></svg>
<span style="left:859.80px;top:368.00px;font-size:7.69px;color:#67727a;letter-spacing:-0.031px;">TIA</span>
<div style="left:963.00px;top:365.64px;width:42.50px;height:10.60px;background:#e3e6e8;border-radius:1px;"></div>
<span style="left:966.00px;top:368.00px;font-size:6.59px;color:#6a747b;letter-spacing:-0.143px;">Summary</span>
<svg style="left:997.30px;top:367.74px;width:6.6px;height:6.6px" viewBox="0 0 16 16" fill="#5f6970"><path d="M3 5.5 H13 L8 11 Z"/></svg>
<div style="left:146.50px;top:393.30px;width:753.50px;height:1.00px;background:#e8ecee;"></div>
<div style="left:958.00px;top:393.30px;width:58.00px;height:1.00px;background:#e8ecee;"></div>
<svg style="left:161.30px;top:400.60px;width:8.2px;height:8.2px" viewBox="0 0 16 16" fill="#55626c"><path d="M5.5 3.2 L14.5 1.2 V11.2 A2.3 1.9 0 1 1 12.9 9.6 V5 L7.1 6.3 V12.8 A2.3 1.9 0 1 1 5.5 11.2 Z"/></svg>
<span style="left:197.71px;top:401.00px;font-size:7.69px;color:#67727a;letter-spacing:0.291px;">16-bit</span>
<div style="left:227.30px;top:400.05px;width:8.6px;height:8.6px;border-radius:50%;background:#fff;border:0.5px solid #e2e5e7"></div>
<span style="left:230.73px;top:404.00px;font-size:4.9px;color:#d9dcdf;letter-spacing:0.000px;">1</span>
<div style="left:237.15px;top:400.05px;width:8.6px;height:8.6px;border-radius:50%;background:#fff;border:0.5px solid #e2e5e7"></div>
<span style="left:240.58px;top:404.00px;font-size:4.9px;color:#d9dcdf;letter-spacing:0.000px;">2</span>
<div style="left:247.00px;top:400.05px;width:8.6px;height:8.6px;border-radius:50%;background:#fff;border:0.5px solid #e2e5e7"></div>
<span style="left:250.43px;top:404.00px;font-size:4.9px;color:#d9dcdf;letter-spacing:0.000px;">3</span>
<div style="left:256.95px;top:400.30px;width:9.1px;height:9.1px;border-radius:50%;background:#5cb85c"></div>
<span style="left:260.05px;top:403.00px;font-size:5.2px;color:#ffffff;letter-spacing:0.000px;font-weight:700;">4</span>
<span style="left:293.13px;top:401.00px;font-size:7.69px;color:#67727a;letter-spacing:0.198px;">5056192825193</span>
<div style="left:358.1px;top:398.30px;width:13.8px;height:13.8px;background:radial-gradient(ellipse 18% 22% at 38% 45%,#d83218 0 55%,transparent 100%),radial-gradient(ellipse 22% 6% at 48% 72%,#f0c818 0 60%,transparent 100%),radial-gradient(ellipse 32% 6% at 50% 86%,#d9a0d0 0 60%,transparent 100%),radial-gradient(ellipse 34% 36% at 50% 50%,#5a0f0a 0 60%,#0a0606 100%)"></div>
<span style="left:377.40px;top:401.00px;font-size:7.69px;color:#67727a;letter-spacing:-0.255px;">Ezero Cap (No Cap)</span>
<span style="left:600.40px;top:401.00px;font-size:7.69px;color:#67727a;letter-spacing:-0.089px;">Abramsoul, Otega</span>
<span style="left:677.10px;top:401.00px;font-size:7.69px;color:#67727a;letter-spacing:0.302px;">16/12/2020</span>
<span style="left:801.50px;top:401.00px;font-size:7.69px;color:#67727a;letter-spacing:-0.344px;">Free</span>
<svg style="left:844.70px;top:398.70px;width:13.40px;height:13.40px;overflow:visible" viewBox="0 0 100 100"><circle cx="50" cy="50" r="50" fill="#2b96d9"/><g fill="none" stroke="#ffffff" stroke-linecap="round" stroke-linejoin="round"><path d="M11 32 C28 23 42 20 54 20 C68 20 80 25 92 28" stroke-width="8.7"/><path d="M12 40 C30 31 44 28.5 54 28.5 C68 28.5 80 33 91 37 C84 41 78 43 72 46" stroke-width="7.4"/><path d="M12 40 C28 47 42 50.5 54 49.5 C62 48.5 68 47 74 45" stroke-width="7.4"/><path d="M72 48 C62 64 46 77 28 78 C14 78 7 71 8 64 C9 56 18 53 24 57 C28 61 25 67 20 66" stroke-width="8.4"/></g><circle cx="52" cy="36" r="7" fill="#ffffff"/><path d="M70.5 49 L66 81 L83.5 60 C80 56 78 53 77 49 Z" fill="#ffffff"/></svg>
<span style="left:844.80px;top:414.00px;font-size:7.69px;color:#67727a;letter-spacing:-0.072px;">Abramsoul</span>
<div style="left:963.00px;top:399.50px;width:42.50px;height:10.60px;background:#e3e6e8;border-radius:1px;"></div>
<span style="left:966.00px;top:402.00px;font-size:6.59px;color:#6a747b;letter-spacing:-0.143px;">Summary</span>
<svg style="left:997.30px;top:401.60px;width:6.6px;height:6.6px" viewBox="0 0 16 16" fill="#5f6970"><path d="M3 5.5 H13 L8 11 Z"/></svg>
<div style="left:146.50px;top:427.16px;width:753.50px;height:1.00px;background:#e8ecee;"></div>
<div style="left:958.00px;top:427.16px;width:58.00px;height:1.00px;background:#e8ecee;"></div>
<svg style="left:161.30px;top:434.46px;width:8.2px;height:8.2px" viewBox="0 0 16 16" fill="#55626c"><path d="M5.5 3.2 L14.5 1.2 V11.2 A2.3 1.9 0 1 1 12.9 9.6 V5 L7.1 6.3 V12.8 A2.3 1.9 0 1 1 5.5 11.2 Z"/></svg>
<span style="left:197.71px;top:435.00px;font-size:7.69px;color:#67727a;letter-spacing:0.291px;">16-bit</span>
<div style="left:227.30px;top:433.91px;width:8.6px;height:8.6px;border-radius:50%;background:#fff;border:0.5px solid #e2e5e7"></div>
<span style="left:230.73px;top:438.00px;font-size:4.9px;color:#d9dcdf;letter-spacing:0.000px;">1</span>
<div style="left:237.15px;top:433.91px;width:8.6px;height:8.6px;border-radius:50%;background:#fff;border:0.5px solid #e2e5e7"></div>
<span style="left:240.58px;top:438.00px;font-size:4.9px;color:#d9dcdf;letter-spacing:0.000px;">2</span>
<div style="left:247.00px;top:433.91px;width:8.6px;height:8.6px;border-radius:50%;background:#fff;border:0.5px solid #e2e5e7"></div>
<span style="left:250.43px;top:438.00px;font-size:4.9px;color:#d9dcdf;letter-spacing:0.000px;">3</span>
<div style="left:256.95px;top:434.16px;width:9.1px;height:9.1px;border-radius:50%;background:#5cb85c"></div>
<span style="left:260.05px;top:437.00px;font-size:5.2px;color:#ffffff;letter-spacing:0.000px;font-weight:700;">4</span>
<span style="left:293.13px;top:435.00px;font-size:7.69px;color:#67727a;letter-spacing:0.198px;">5056192824806</span>
<div style="left:358.1px;top:432.16px;width:13.8px;height:13.8px;background:radial-gradient(ellipse 34% 6% at 50% 22%,#d8a828 0 55%,transparent 100%),radial-gradient(ellipse 14% 5% at 36% 82%,#e0b020 0 60%,transparent 100%),radial-gradient(ellipse 12% 6% at 72% 56%,#b88a28 0 50%,transparent 100%),radial-gradient(ellipse 8% 8% at 30% 62%,#a85a3a 0 50%,transparent 100%),radial-gradient(ellipse 50% 50% at 50% 50%,#3a2212 0 40%,#120a06 100%)"></div>
<span style="left:377.40px;top:435.00px;font-size:7.69px;color:#67727a;letter-spacing:0.005px;">Amugborodun</span>
<span style="left:600.40px;top:435.00px;font-size:7.69px;color:#67727a;letter-spacing:-0.139px;">Ibile Gang</span>
<span style="left:677.10px;top:435.00px;font-size:7.69px;color:#67727a;letter-spacing:0.366px;">30/11/2020</span>
<span style="left:801.50px;top:435.00px;font-size:7.69px;color:#67727a;letter-spacing:-0.344px;">Free</span>
<svg style="left:844.70px;top:432.56px;width:13.40px;height:13.40px;overflow:visible" viewBox="0 0 100 100"><circle cx="50" cy="50" r="50" fill="#2b96d9"/><g fill="none" stroke="#ffffff" stroke-linecap="round" stroke-linejoin="round"><path d="M11 32 C28 23 42 20 54 20 C68 20 80 25 92 28" stroke-width="8.7"/><path d="M12 40 C30 31 44 28.5 54 28.5 C68 28.5 80 33 91 37 C84 41 78 43 72 46" stroke-width="7.4"/><path d="M12 40 C28 47 42 50.5 54 49.5 C62 48.5 68 47 74 45" stroke-width="7.4"/><path d="M72 48 C62 64 46 77 28 78 C14 78 7 71 8 64 C9 56 18 53 24 57 C28 61 25 67 20 66" stroke-width="8.4"/></g><circle cx="52" cy="36" r="7" fill="#ffffff"/><path d="M70.5 49 L66 81 L83.5 60 C80 56 78 53 77 49 Z" fill="#ffffff"/></svg>
<span style="left:859.80px;top:436.00px;font-size:7.69px;color:#67727a;letter-spacing:-0.139px;">Ibile Gang</span>
<div style="left:963.00px;top:433.36px;width:42.50px;height:10.60px;background:#e3e6e8;border-radius:1px;"></div>
<span style="left:966.00px;top:436.00px;font-size:6.59px;color:#6a747b;letter-spacing:-0.143px;">Summary</span>
<svg style="left:997.30px;top:435.46px;width:6.6px;height:6.6px" viewBox="0 0 16 16" fill="#5f6970"><path d="M3 5.5 H13 L8 11 Z"/></svg>
<div style="left:146.50px;top:461.02px;width:753.50px;height:1.00px;background:#e8ecee;"></div>
<div style="left:958.00px;top:461.02px;width:58.00px;height:1.00px;background:#e8ecee;"></div>
<svg style="left:161.30px;top:468.02px;width:8.2px;height:8.2px" viewBox="0 0 16 16" fill="#55626c"><rect x="0.4" y="2.6" width="10.8" height="10.8" rx="2.2"/><path d="M11.6 6.6 L15.6 3.2 V12.8 L11.6 9.4 Z"/></svg>
<div style="left:227.30px;top:467.77px;width:8.6px;height:8.6px;border-radius:50%;background:#fff;border:0.5px solid #e2e5e7"></div>
<span style="left:230.73px;top:471.00px;font-size:4.9px;color:#d9dcdf;letter-spacing:0.000px;">1</span>
<div style="left:237.15px;top:467.77px;width:8.6px;height:8.6px;border-radius:50%;background:#fff;border:0.5px solid #e2e5e7"></div>
<span style="left:240.58px;top:471.00px;font-size:4.9px;color:#d9dcdf;letter-spacing:0.000px;">2</span>
<div style="left:247.00px;top:467.77px;width:8.6px;height:8.6px;border-radius:50%;background:#fff;border:0.5px solid #e2e5e7"></div>
<span style="left:250.43px;top:471.00px;font-size:4.9px;color:#d9dcdf;letter-spacing:0.000px;">3</span>
<div style="left:256.95px;top:468.02px;width:9.1px;height:9.1px;border-radius:50%;background:#5cb85c"></div>
<span style="left:260.05px;top:471.00px;font-size:5.2px;color:#ffffff;letter-spacing:0.000px;font-weight:700;">4</span>
<span style="left:293.13px;top:469.00px;font-size:7.69px;color:#67727a;letter-spacing:0.198px;">5056192824769</span>
<div style="left:358.1px;top:466.02px;width:13.8px;height:13.8px;background:radial-gradient(ellipse 14% 22% at 50% 30%,#8a6a48 0 55%,transparent 100%),radial-gradient(ellipse 22% 22% at 82% 22%,#74bce6 0 55%,transparent 100%),radial-gradient(ellipse 8% 12% at 58% 62%,#6aa83a 0 50%,transparent 100%),linear-gradient(180deg,#1f9478 0%,#1a8a70 45%,#0f5a46 85%,#0a3a2e 100%)"></div>
<span style="left:377.40px;top:469.00px;font-size:7.69px;color:#67727a;letter-spacing:-0.102px;">My Mama Son</span>
<span style="left:600.40px;top:469.00px;font-size:7.69px;color:#67727a;letter-spacing:-0.031px;">TIA</span>
<span style="left:677.10px;top:469.00px;font-size:7.69px;color:#67727a;letter-spacing:0.366px;">27/11/2020</span>
<span style="left:801.50px;top:469.00px;font-size:7.69px;color:#67727a;letter-spacing:-0.344px;">Free</span>
<svg style="left:844.70px;top:466.42px;width:13.40px;height:13.40px;overflow:visible" viewBox="0 0 100 100"><circle cx="50" cy="50" r="50" fill="#2b96d9"/><g fill="none" stroke="#ffffff" stroke-linecap="round" stroke-linejoin="round"><path d="M11 32 C28 23 42 20 54 20 C68 20 80 25 92 28" stroke-width="8.7"/><path d="M12 40 C30 31 44 28.5 54 28.5 C68 28.5 80 33 91 37 C84 41 78 43 72 46" stroke-width="7.4"/><path d="M12 40 C28 47 42 50.5 54 49.5 C62 48.5 68 47 74 45" stroke-width="7.4"/><path d="M72 48 C62 64 46 77 28 78 C14 78 7 71 8 64 C9 56 18 53 24 57 C28 61 25 67 20 66" stroke-width="8.4"/></g><circle cx="52" cy="36" r="7" fill="#ffffff"/><path d="M70.5 49 L66 81 L83.5 60 C80 56 78 53 77 49 Z" fill="#ffffff"/></svg>
<span style="left:859.80px;top:469.00px;font-size:7.69px;color:#67727a;letter-spacing:-0.031px;">TIA</span>
<div style="left:963.00px;top:467.22px;width:42.50px;height:10.60px;background:#e3e6e8;border-radius:1px;"></div>
<span style="left:966.00px;top:469.00px;font-size:6.59px;color:#6a747b;letter-spacing:-0.143px;">Summary</span>
<svg style="left:997.30px;top:469.32px;width:6.6px;height:6.6px" viewBox="0 0 16 16" fill="#5f6970"><path d="M3 5.5 H13 L8 11 Z"/></svg>
<div style="left:146.50px;top:494.88px;width:753.50px;height:1.00px;background:#e8ecee;"></div>
<div style="left:958.00px;top:494.88px;width:58.00px;height:1.00px;background:#e8ecee;"></div>
<svg style="left:161.30px;top:502.18px;width:8.2px;height:8.2px" viewBox="0 0 16 16" fill="#55626c"><path d="M5.5 3.2 L14.5 1.2 V11.2 A2.3 1.9 0 1 1 12.9 9.6 V5 L7.1 6.3 V12.8 A2.3 1.9 0 1 1 5.5 11.2 Z"/></svg>
<span style="left:197.71px;top:503.00px;font-size:7.69px;color:#67727a;letter-spacing:0.291px;">16-bit</span>
<div style="left:227.30px;top:501.63px;width:8.6px;height:8.6px;border-radius:50%;background:#fff;border:0.5px solid #e2e5e7"></div>
<span style="left:230.73px;top:505.00px;font-size:4.9px;color:#d9dcdf;letter-spacing:0.000px;">1</span>
<div style="left:237.15px;top:501.63px;width:8.6px;height:8.6px;border-radius:50%;background:#fff;border:0.5px solid #e2e5e7"></div>
<span style="left:240.58px;top:505.00px;font-size:4.9px;color:#d9dcdf;letter-spacing:0.000px;">2</span>
<div style="left:247.00px;top:501.63px;width:8.6px;height:8.6px;border-radius:50%;background:#fff;border:0.5px solid #e2e5e7"></div>
<span style="left:250.43px;top:505.00px;font-size:4.9px;color:#d9dcdf;letter-spacing:0.000px;">3</span>
<div style="left:256.95px;top:501.88px;width:9.1px;height:9.1px;border-radius:50%;background:#5cb85c"></div>
<span style="left:260.05px;top:504.00px;font-size:5.2px;color:#ffffff;letter-spacing:0.000px;font-weight:700;">4</span>
<span style="left:293.13px;top:503.00px;font-size:7.69px;color:#67727a;letter-spacing:0.198px;">5056192824141</span>
<div style="left:358.1px;top:499.88px;width:13.8px;height:13.8px;background:radial-gradient(ellipse 7% 12% at 30% 24%,#c9a06a 0 55%,transparent 100%),linear-gradient(100deg,#14181c 0%,#2a3036 30%,#4a5056 46%,#d4d6d8 56%,#e8e9ea 75%,#b9bbbd 90%,#2a2c2e 100%)"></div>
<span style="left:377.40px;top:503.00px;font-size:7.69px;color:#67727a;letter-spacing:-0.102px;">My Mama Son</span>
<span style="left:600.40px;top:503.00px;font-size:7.69px;color:#67727a;letter-spacing:-0.031px;">TIA</span>
<span style="left:677.10px;top:503.00px;font-size:7.69px;color:#67727a;letter-spacing:0.366px;">23/11/2020</span>
<span style="left:801.50px;top:503.00px;font-size:7.69px;color:#67727a;letter-spacing:-0.344px;">Free</span>
<svg style="left:844.70px;top:500.28px;width:13.40px;height:13.40px;overflow:visible" viewBox="0 0 100 100"><circle cx="50" cy="50" r="50" fill="#2b96d9"/><g fill="none" stroke="#ffffff" stroke-linecap="round" stroke-linejoin="round"><path d="M11 32 C28 23 42 20 54 20 C68 20 80 25 92 28" stroke-width="8.7"/><path d="M12 40 C30 31 44 28.5 54 28.5 C68 28.5 80 33 91 37 C84 41 78 43 72 46" stroke-width="7.4"/><path d="M12 40 C28 47 42 50.5 54 49.5 C62 48.5 68 47 74 45" stroke-width="7.4"/><path d="M72 48 C62 64 46 77 28 78 C14 78 7 71 8 64 C9 56 18 53 24 57 C28 61 25 67 20 66" stroke-width="8.4"/></g><circle cx="52" cy="36" r="7" fill="#ffffff"/><path d="M70.5 49 L66 81 L83.5 60 C80 56 78 53 77 49 Z" fill="#ffffff"/></svg>
<span style="left:859.80px;top:503.00px;font-size:7.69px;color:#67727a;letter-spacing:-0.031px;">TIA</span>
<div style="left:963.00px;top:501.08px;width:42.50px;height:10.60px;background:#e3e6e8;border-radius:1px;"></div>
<span style="left:966.00px;top:503.00px;font-size:6.59px;color:#6a747b;letter-spacing:-0.143px;">Summary</span>
<svg style="left:997.30px;top:503.18px;width:6.6px;height:6.6px" viewBox="0 0 16 16" fill="#5f6970"><path d="M3 5.5 H13 L8 11 Z"/></svg>
<div style="left:146.50px;top:528.74px;width:753.50px;height:1.00px;background:#e8ecee;"></div>
<div style="left:958.00px;top:528.74px;width:58.00px;height:1.00px;background:#e8ecee;"></div>
<svg style="left:161.30px;top:536.04px;width:8.2px;height:8.2px" viewBox="0 0 16 16" fill="#55626c"><path d="M5.5 3.2 L14.5 1.2 V11.2 A2.3 1.9 0 1 1 12.9 9.6 V5 L7.1 6.3 V12.8 A2.3 1.9 0 1 1 5.5 11.2 Z"/></svg>
<span style="left:197.71px;top:537.00px;font-size:7.69px;color:#67727a;letter-spacing:0.291px;">16-bit</span>
<div style="left:227.30px;top:535.49px;width:8.6px;height:8.6px;border-radius:50%;background:#fff;border:0.5px solid #e2e5e7"></div>
<span style="left:230.73px;top:539.00px;font-size:4.9px;color:#d9dcdf;letter-spacing:0.000px;">1</span>
<div style="left:237.15px;top:535.49px;width:8.6px;height:8.6px;border-radius:50%;background:#fff;border:0.5px solid #e2e5e7"></div>
<span style="left:240.58px;top:539.00px;font-size:4.9px;color:#d9dcdf;letter-spacing:0.000px;">2</span>
<div style="left:247.00px;top:535.49px;width:8.6px;height:8.6px;border-radius:50%;background:#fff;border:0.5px solid #e2e5e7"></div>
<span style="left:250.43px;top:539.00px;font-size:4.9px;color:#d9dcdf;letter-spacing:0.000px;">3</span>
<div style="left:256.95px;top:535.74px;width:9.1px;height:9.1px;border-radius:50%;background:#5cb85c"></div>
<span style="left:260.05px;top:538.00px;font-size:5.2px;color:#ffffff;letter-spacing:0.000px;font-weight:700;">4</span>
<span style="left:293.13px;top:537.00px;font-size:7.69px;color:#67727a;letter-spacing:0.198px;">5056192823151</span>
<div style="left:358.1px;top:533.74px;width:13.8px;height:13.8px;background:radial-gradient(ellipse 9% 14% at 50% 44%,#c8562a 0 55%,transparent 100%),radial-gradient(ellipse 17% 24% at 50% 42%,#2a2010 0 62%,transparent 100%),radial-gradient(ellipse 9% 8% at 50% 72%,#d8281c 0 55%,transparent 100%),linear-gradient(#f8d040,#f6cc3a)"></div>
<span style="left:377.40px;top:537.00px;font-size:7.69px;color:#67727a;letter-spacing:-0.139px;">O.Y.O(on your own)</span>
<span style="left:600.40px;top:537.00px;font-size:7.69px;color:#67727a;letter-spacing:-0.231px;">Shine Shine</span>
<span style="left:677.10px;top:537.00px;font-size:7.69px;color:#67727a;letter-spacing:0.302px;">16/10/2020</span>
<span style="left:801.50px;top:537.00px;font-size:7.69px;color:#67727a;letter-spacing:-0.344px;">Free</span>
<svg style="left:844.70px;top:534.14px;width:13.40px;height:13.40px;overflow:visible" viewBox="0 0 100 100"><circle cx="50" cy="50" r="50" fill="#2b96d9"/><g fill="none" stroke="#ffffff" stroke-linecap="round" stroke-linejoin="round"><path d="M11 32 C28 23 42 20 54 20 C68 20 80 25 92 28" stroke-width="8.7"/><path d="M12 40 C30 31 44 28.5 54 28.5 C68 28.5 80 33 91 37 C84 41 78 43 72 46" stroke-width="7.4"/><path d="M12 40 C28 47 42 50.5 54 49.5 C62 48.5 68 47 74 45" stroke-width="7.4"/><path d="M72 48 C62 64 46 77 28 78 C14 78 7 71 8 64 C9 56 18 53 24 57 C28 61 25 67 20 66" stroke-width="8.4"/></g><circle cx="52" cy="36" r="7" fill="#ffffff"/><path d="M70.5 49 L66 81 L83.5 60 C80 56 78 53 77 49 Z" fill="#ffffff"/></svg>
<span style="left:859.80px;top:537.00px;font-size:7.69px;color:#67727a;letter-spacing:-0.270px;">Shine</span>
<span style="left:844.80px;top:550.00px;font-size:7.69px;color:#67727a;letter-spacing:-0.270px;">Shine</span>
<div style="left:963.00px;top:534.94px;width:42.50px;height:10.60px;background:#e3e6e8;border-radius:1px;"></div>
<span style="left:966.00px;top:537.00px;font-size:6.59px;color:#6a747b;letter-spacing:-0.143px;">Summary</span>
<svg style="left:997.30px;top:537.04px;width:6.6px;height:6.6px" viewBox="0 0 16 16" fill="#5f6970"><path d="M3 5.5 H13 L8 11 Z"/></svg>
<span style="left:154.50px;top:570.00px;font-size:6.59px;color:#67727a;letter-spacing:-0.146px;">Show</span>
<div style="left:172.0px;top:564.3px;width:40.4px;height:14.8px;border:0.7px solid #e2e6e9;background:#fff;border-radius:1px"></div>
<span style="left:180.70px;top:570.00px;font-size:7.14px;color:#67727a;letter-spacing:0.328px;">10</span>
<svg style="left:205.50px;top:570.10px;width:5.6px;height:5.6px" viewBox="0 0 10 10" fill="none" stroke="#3a3f44" stroke-width="2.14"><path d="M1 3 L5 7 L9 3"/></svg>
<span style="left:215.00px;top:570.00px;font-size:6.59px;color:#67727a;letter-spacing:0.003px;">entries</span>
<div style="left:285px;top:226.9px;width:66px;height:339.1px;border:3px solid #ff2600;background:none"></div>
</div></body></html>
